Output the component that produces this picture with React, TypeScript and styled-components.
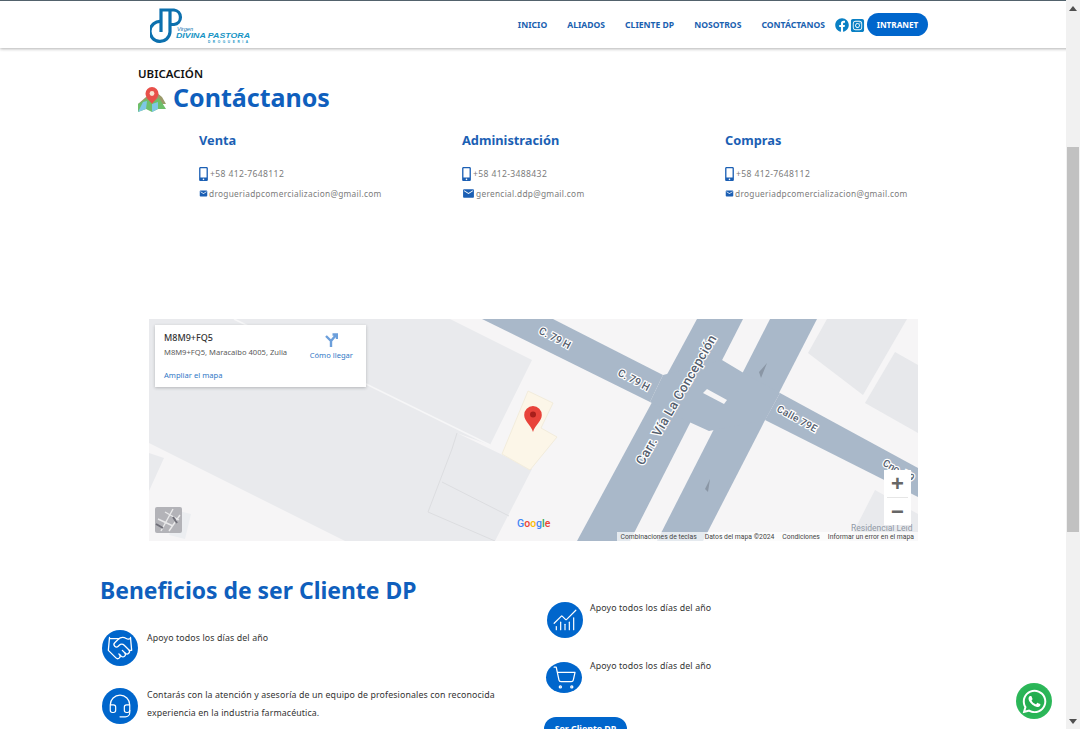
import React from 'react';
import styled, { createGlobalStyle } from 'styled-components';
import { Handshake, Headset, ChartNoAxesCombined, ShoppingCart } from 'lucide-react';
import { FaFacebook, FaMobileAlt, FaWhatsapp } from 'react-icons/fa';
import { FaSquareInstagram } from 'react-icons/fa6';
import { MdEmail } from 'react-icons/md';

const blue = '#0066cc';
const titleBlue = '#0f5fbd';

const GlobalStyle = createGlobalStyle`
    html, body {
        margin: 0;
        padding: 0;
        overflow: hidden;
        background: #fff;
        font-family: "Noto Sans", "Open Sans", sans-serif;
    }
`;

const Viewport = styled.div`
    position: relative;
    display: flex;
    width: 1080px;
    height: 729px;
    overflow: hidden;
`;

const Page = styled.div`
    flex: 1;
    min-width: 0;
`;

const Header = styled.header`
    box-sizing: border-box;
    height: 48px;
    border-top: 1px solid #52626c;
    margin-right: -14px;
    padding: 0 152px 0 150px;
    display: flex;
    align-items: center;
    justify-content: space-between;
    background: #fff;
    box-shadow: 0 1px 3px rgba(0, 0, 0, 0.3);
`;

const Nav = styled.nav`
    display: flex;
    align-items: center;
    gap: 20px;
`;

const NavLink = styled.a`
    font-size: 8.6px;
    font-weight: 700;
    color: #1a61b0;
    white-space: nowrap;
`;

const Socials = styled.div`
    display: flex;
    align-items: center;
    gap: 1px;
    margin: 1px 0 0 -10px;
    color: #0a80c4;
`;

const PillButton = styled.a`
    display: inline-flex;
    align-items: center;
    justify-content: center;
    background: ${blue};
    color: #fff;
    font-weight: 700;
    white-space: nowrap;
`;

const IntranetButton = styled(PillButton)`
    width: 61px;
    height: 23px;
    border-radius: 12px;
    font-size: 8.2px;
    margin-left: -18px;
`;

const Main = styled.main`
    padding-top: 18px;
`;

const ContactSection = styled.section`
    padding-left: 138px;
`;

const Eyebrow = styled.div`
    font-size: 11.5px;
    line-height: 15px;
    font-weight: 600;
    color: #111;
`;

const TitleRow = styled.div`
    display: flex;
    align-items: center;
    gap: 7px;
    height: 33px;
    svg {
        margin-top: 3px;
    }
`;

const Title = styled.h1`
    margin: 0;
    font-size: 25px;
    line-height: 33px;
    font-weight: 700;
    color: ${titleBlue};
`;

const ContactGrid = styled.div`
    display: grid;
    grid-template-columns: repeat(3, 263px);
    margin: 16px 0 0 61px;
    height: 189px;
`;

const ContactName = styled.h3`
    margin: 0 0 16px;
    font-size: 12.8px;
    line-height: 20px;
    font-weight: 700;
    color: #1b5fb4;
`;

const ContactRow = styled.div`
    display: flex;
    align-items: center;
    height: 16px;
    margin-bottom: 3px;
    color: #7b7b7b;
    svg {
        color: #1b5fb4;
        flex-shrink: 0;
    }
`;

const PhoneRow = styled(ContactRow)`
    gap: 2px;
    font-size: 8.6px;
    letter-spacing: 0.35px;
`;

const MailRow = styled(ContactRow)`
    gap: 1px;
    font-size: 8.3px;
    letter-spacing: 0.3px;
`;

const PhoneIcon = styled(FaMobileAlt)`
    width: 9px;
    height: 14px;
    margin-top: -1px;
`;

const MapFrame = styled.div`
    position: relative;
    width: 769px;
    height: 222px;
    margin-left: 149px;
    overflow: hidden;
    background: #f6f5f6;
    svg.map-canvas {
        display: block;
    }
`;

const InfoCard = styled.div`
    position: absolute;
    left: 6px;
    top: 6px;
    box-sizing: border-box;
    width: 211px;
    height: 62px;
    padding: 7px 9px;
    background: #fff;
    box-shadow: 0 1px 3px rgba(60, 64, 67, 0.3);
`;

const PlaceName = styled.div`
    font-size: 9px;
    line-height: 11px;
    font-weight: 500;
    color: #333;
`;

const PlaceAddress = styled.div`
    margin-top: 4px;
    font-size: 7.6px;
    line-height: 10px;
    color: #5b5b5b;
`;

const MapLink = styled.a`
    display: block;
    font-size: 7.6px;
    line-height: 10px;
    color: #3178c6;
`;

const EnlargeLink = styled(MapLink)`
    margin-top: 13px;
`;

const Directions = styled.div`
    position: absolute;
    top: 8px;
    right: 13px;
    display: flex;
    flex-direction: column;
    align-items: center;
    gap: 3px;
`;

const ZoomControl = styled.div`
    position: absolute;
    left: 735px;
    top: 151px;
    width: 27px;
    height: 55px;
    display: flex;
    flex-direction: column;
    align-items: center;
    background: #fff;
`;

const ZoomButton = styled.div`
    flex: 1;
    width: 100%;
    display: flex;
    align-items: center;
    justify-content: center;
    font-family: "Liberation Sans", sans-serif;
    font-size: 22px;
    font-weight: 700;
    color: #666;
`;

const ZoomDivider = styled.div`
    width: 21px;
    height: 1px;
    background: #e6e6e6;
`;

const Attribution = styled.div`
    position: absolute;
    right: 0;
    bottom: 0;
    height: 9px;
    padding: 0 4px;
    display: flex;
    align-items: center;
    gap: 8px;
    background: rgba(255, 255, 255, 0.7);
    font-family: "Roboto", sans-serif;
    font-size: 6.8px;
    color: #444;
    white-space: nowrap;
`;

const BenefitsGrid = styled.section`
    display: grid;
    grid-template-columns: 444px 1fr;
    margin-top: 32px;
    padding-left: 100px;
`;

const BenefitsTitle = styled.h2`
    margin: 0 0 21px;
    font-size: 22.9px;
    line-height: 36px;
    font-weight: 700;
    color: ${titleBlue};
`;

const LeftColumn = styled.div``;

const RightColumn = styled.div`
    padding-top: 29px;
`;

const Benefit = styled.div<{ $inset: number; $gap: number; $after: number }>`
    display: flex;
    align-items: flex-start;
    gap: ${(p) => p.$gap}px;
    padding-left: ${(p) => p.$inset}px;
    margin-bottom: ${(p) => p.$after}px;
`;

const IconCircle = styled.div<{ $height?: number }>`
    flex: 0 0 36px;
    width: 36px;
    height: ${(p) => p.$height ?? 36}px;
    border-radius: 50%;
    display: flex;
    align-items: center;
    justify-content: center;
    background: ${blue};
    color: #fff;
`;

const BenefitText = styled.p<{ $lift: number }>`
    margin: ${(p) => -p.$lift}px 0 0;
    max-width: 350px;
    font-size: 8.8px;
    line-height: 18px;
    letter-spacing: 0.12px;
    color: #333;
`;

const ClientButton = styled(PillButton)`
    width: 83px;
    height: 24px;
    border-radius: 12px;
    font-size: 8.8px;
`;

const WhatsappBubble = styled.a`
    position: absolute;
    left: 1016px;
    top: 683px;
    width: 36px;
    height: 36px;
    border-radius: 50%;
    display: flex;
    align-items: center;
    justify-content: center;
    background: radial-gradient(circle, #1fa84a 0%, #2db85a 70%, #47c873 100%);
    color: #fff;
`;

const ScrollTrack = styled.div`
    position: relative;
    z-index: 2;
    flex: 0 0 14px;
    display: flex;
    flex-direction: column;
    background: #f1f1f1;
`;

const ScrollArrow = styled.div`
    height: 16px;
    display: flex;
    align-items: center;
    justify-content: center;
`;

const ScrollSpace = styled.div<{ $size: number }>`
    height: ${(p) => p.$size}px;
    flex-shrink: 0;
`;

const ScrollThumb = styled.div`
    height: 385px;
    margin: 0 1px;
    background: #c1c1c1;
`;

const Logo = () => (
    <svg width="102" height="44" viewBox="0 0 102 44" aria-label="Virgen Divina Pastora">
        <path d="M11 18.5 A10 10 0 1 0 20 29 V7" fill="none" stroke="#0c70ae" strokeWidth="3.2" />
        <path d="M11 29 V7 H24 A7.3 7.3 0 0 1 24 21.5 H20" fill="none" stroke="#0c70ae" strokeWidth="3.2" />
        <text x="27" y="27.5" fontFamily="Liberation Sans" fontSize="5.6" fontStyle="italic" fill="#0c70ae">Virgen</text>
        <text x="26" y="35" fontFamily="Liberation Sans" fontSize="8" fontWeight="700" fontStyle="italic" fill="#1593c4" textLength="74" lengthAdjust="spacingAndGlyphs">DIVINA PASTORA</text>
        <text x="58" y="39.5" fontFamily="Liberation Sans" fontSize="3.2" fontWeight="700" fill="#1593c4" textLength="40">DROGUERIA</text>
    </svg>
);

const MapPinIcon = () => (
    <svg width="28" height="25" viewBox="0 0 28 25">
        <path d="M8 10 L13 5 L18 5 L24 10 L28 17 L0 17 Z" fill="#9a9a6a" />
        <path d="M0 17 L8 12 L14 15 L21 11 L28 22 L20 22 L14 25 L8 22 L0 25 Z" fill="#6dbf6a" />
        <path d="M0 25 L5 15 L9 14 L8 22 Z" fill="#7ec7e6" />
        <path d="M14 25 L14 17 L20 15 L20 22 Z" fill="#7ec7e6" />
        <path d="M14 0 A6.5 6.5 0 0 1 20.5 6.5 C20.5 11 16 14 14 17 C12 14 7.5 11 7.5 6.5 A6.5 6.5 0 0 1 14 0 Z" fill="#e8504a" />
        <circle cx="14" cy="6.5" r="2.4" fill="#f7e3d0" />
    </svg>
);

const StreetLabel = styled.text`
    font-family: "Roboto", sans-serif;
    font-weight: 500;
    fill: #55606e;
    stroke: #fff;
    stroke-width: 2.4px;
    paint-order: stroke;
`;

const MapDrawing = () => (
    <svg className="map-canvas" width="769" height="222" viewBox="0 0 769 222">
        {/* edificios */}
        <polygon points="0,0 301,0 383,41 341,126 308,114 383,150 346,222 196,222 0,124" fill="#e9eaed" />
        <polygon points="0,134 15,139 0,172" fill="#e9eaed" />
        <polygon points="678,0 758,0 714,76 659,34" fill="#e7e8eb" />
        <polygon points="746,33 769,46 769,114 716,84" fill="#e7e8eb" />
        <polygon points="726,171 769,195 769,222 700,222" fill="#e9eaed" />
        <polyline points="85,0 341,126" fill="none" stroke="#f6f6f7" strokeWidth="1.6" />
        <polyline points="308,114 303,130 279,193 346,222" fill="none" stroke="#dcdde0" strokeWidth="1" />
        <polyline points="293,163 360,197" fill="none" stroke="#dcdde0" strokeWidth="1" />
        <polygon points="379,72 404,84 392,109 408,118 381,151 353,135" fill="#fcf6e8" stroke="#f2ecdc" strokeWidth="1" />
        {/* calles */}
        <g fill="#a9b8c9">
            <polygon points="333,0 404,0 514,56 501,83" />
            <polygon points="631,74 769,149 769,178 616,101" />
            <polygon points="548,0 594,0 481,222 428,222" />
            <polygon points="621,0 668,0 554,222 508,222" />
            <polygon points="514,56 573,41 593,53 631,74 616,101 560,112 538,102 501,83" />
        </g>
        <polygon points="558,70 578,81 575,85 554,74" fill="#f6f5f6" />
        <polygon points="610,53 618,44 612,59" fill="#8a96a5" />
        <polygon points="556,170 561,160 559,173" fill="#8a96a5" />
        <StreetLabel fontSize="10.5" transform="translate(389 14) rotate(28)">C. 79 H</StreetLabel>
        <StreetLabel fontSize="10.5" transform="translate(468 56) rotate(28)">C. 79 H</StreetLabel>
        <StreetLabel fontSize="13" letterSpacing="0.4" transform="translate(494 147) rotate(-60)">Carr. Vía La Concepción</StreetLabel>
        <StreetLabel fontSize="10" letterSpacing="0.3" transform="translate(627 92) rotate(29)">Calle 79E</StreetLabel>
        <StreetLabel fontSize="10" transform="translate(733 146) rotate(29)">Cno. 79</StreetLabel>
        <text x="702" y="212" fontFamily="Roboto" fontSize="8.5" fill="#8f98a5">Residencial Leid</text>
        {/* marcador */}
        <path d="M384 87 A8.8 8.8 0 0 1 392.8 96 C392.8 102 386 106 384 113 C382 106 375.2 102 375.2 96 A8.8 8.8 0 0 1 384 87 Z" fill="#e8433a" />
        <circle cx="384" cy="95.5" r="3" fill="#a81f1b" />
        {/* logo */}
        <text x="368" y="208" fontFamily="Roboto" fontSize="10.5" fontWeight="500">
            <tspan fill="#4285f4">G</tspan>
            <tspan fill="#ea4335">o</tspan>
            <tspan fill="#fbbc05">o</tspan>
            <tspan fill="#4285f4">g</tspan>
            <tspan fill="#34a853">l</tspan>
            <tspan fill="#ea4335">e</tspan>
        </text>
        {/* miniatura satelite */}
        <polygon points="30,192 42,195 36,220 20,216" fill="#eceef1" />
        <rect x="6" y="188" width="27" height="26" rx="2" fill="#b3b3b8" />
        <path d="M12 212 L24 190 M20 212 L31 196 M9 200 L24 207 M16 193 L30 201" stroke="#e9e9ea" strokeWidth="1.4" />
        <path d="M7 205 L14 209 M24 198 L28 204" stroke="#6f6f78" strokeWidth="2" />
    </svg>
);

const contacts = [
    { name: 'Venta', phone: '+58 412-7648112', mail: 'drogueriadpcomercializacion@gmail.com', mailIcon: 9 },
    { name: 'Administración', phone: '+58 412-3488432', mail: 'gerencial.ddp@gmail.com', mailIcon: 13 },
    { name: 'Compras', phone: '+58 412-7648112', mail: 'drogueriadpcomercializacion@gmail.com', mailIcon: 9 },
];

const App: React.FC = () => {
    return (
        <Viewport>
            <GlobalStyle />
            <Page>
                <Header>
                    <Logo />
                    <Nav>
                        <NavLink>INICIO</NavLink>
                        <NavLink>ALIADOS</NavLink>
                        <NavLink>CLIENTE DP</NavLink>
                        <NavLink>NOSOTROS</NavLink>
                        <NavLink>CONTÁCTANOS</NavLink>
                        <Socials>
                            <FaFacebook size={14} />
                            <FaSquareInstagram size={15} />
                        </Socials>
                        <IntranetButton>INTRANET</IntranetButton>
                    </Nav>
                </Header>
                <Main>
                    <ContactSection>
                        <Eyebrow>UBICACIÓN</Eyebrow>
                        <TitleRow>
                            <MapPinIcon />
                            <Title>Contáctanos</Title>
                        </TitleRow>
                        <ContactGrid>
                            {contacts.map((c) => (
                                <div key={c.name}>
                                    <ContactName>{c.name}</ContactName>
                                    <PhoneRow>
                                        <PhoneIcon />
                                        {c.phone}
                                    </PhoneRow>
                                    <MailRow>
                                        <MdEmail size={c.mailIcon} />
                                        {c.mail}
                                    </MailRow>
                                </div>
                            ))}
                        </ContactGrid>
                    </ContactSection>
                    <MapFrame>
                        <MapDrawing />
                        <InfoCard>
                            <PlaceName>M8M9+FQ5</PlaceName>
                            <PlaceAddress>M8M9+FQ5, Maracaibo 4005, Zulia</PlaceAddress>
                            <EnlargeLink>Ampliar el mapa</EnlargeLink>
                            <Directions>
                                <svg width="14" height="14" viewBox="0 0 14 14">
                                    <path d="M7 14 V8 L2 3 M7 8 L12 2 M8.5 1.5 H13 V6" fill="none" stroke="#6c9fdb" strokeWidth="2.4" />
                                </svg>
                                <MapLink>Cómo llegar</MapLink>
                            </Directions>
                        </InfoCard>
                        <ZoomControl>
                            <ZoomButton>+</ZoomButton>
                            <ZoomDivider />
                            <ZoomButton>−</ZoomButton>
                        </ZoomControl>
                        <Attribution>
                            <span>Combinaciones de teclas</span>
                            <span>Datos del mapa ©2024</span>
                            <span>Condiciones</span>
                            <span>Informar un error en el mapa</span>
                        </Attribution>
                    </MapFrame>
                    <BenefitsGrid>
                        <LeftColumn>
                            <BenefitsTitle>Beneficios de ser Cliente DP</BenefitsTitle>
                            <Benefit $inset={2} $gap={9} $after={22}>
                                <IconCircle>
                                    <Handshake size={28} strokeWidth={1.1} />
                                </IconCircle>
                                <BenefitText $lift={1}>Apoyo todos los días del año</BenefitText>
                            </Benefit>
                            <Benefit $inset={2} $gap={9} $after={22}>
                                <IconCircle>
                                    <Headset size={26} strokeWidth={1.1} />
                                </IconCircle>
                                <BenefitText $lift={2}>
                                    Contarás con la atención y asesoría de un equipo de profesionales con reconocida experiencia en la industria farmacéutica.
                                </BenefitText>
                            </Benefit>
                        </LeftColumn>
                        <RightColumn>
                            <Benefit $inset={3} $gap={7} $after={24}>
                                <IconCircle>
                                    <ChartNoAxesCombined size={26} strokeWidth={1.1} />
                                </IconCircle>
                                <BenefitText $lift={3}>Apoyo todos los días del año</BenefitText>
                            </Benefit>
                            <Benefit $inset={2} $gap={8} $after={22}>
                                <IconCircle $height={31}>
                                    <ShoppingCart size={25} strokeWidth={1.2} />
                                </IconCircle>
                                <BenefitText $lift={5}>Apoyo todos los días del año</BenefitText>
                            </Benefit>
                            <ClientButton>Ser Cliente DP</ClientButton>
                        </RightColumn>
                    </BenefitsGrid>
                </Main>
            </Page>
            <ScrollTrack>
                <ScrollArrow>
                    <svg width="8" height="5" viewBox="0 0 8 5"><path d="M4 0 L8 5 H0 Z" fill="#505050" /></svg>
                </ScrollArrow>
                <ScrollSpace $size={131} />
                <ScrollThumb />
                <ScrollSpace $size={181} />
                <ScrollArrow>
                    <svg width="8" height="5" viewBox="0 0 8 5"><path d="M0 0 H8 L4 5 Z" fill="#505050" /></svg>
                </ScrollArrow>
            </ScrollTrack>
            <WhatsappBubble>
                <FaWhatsapp size={27} />
            </WhatsappBubble>
        </Viewport>
    );
};

export default App;
